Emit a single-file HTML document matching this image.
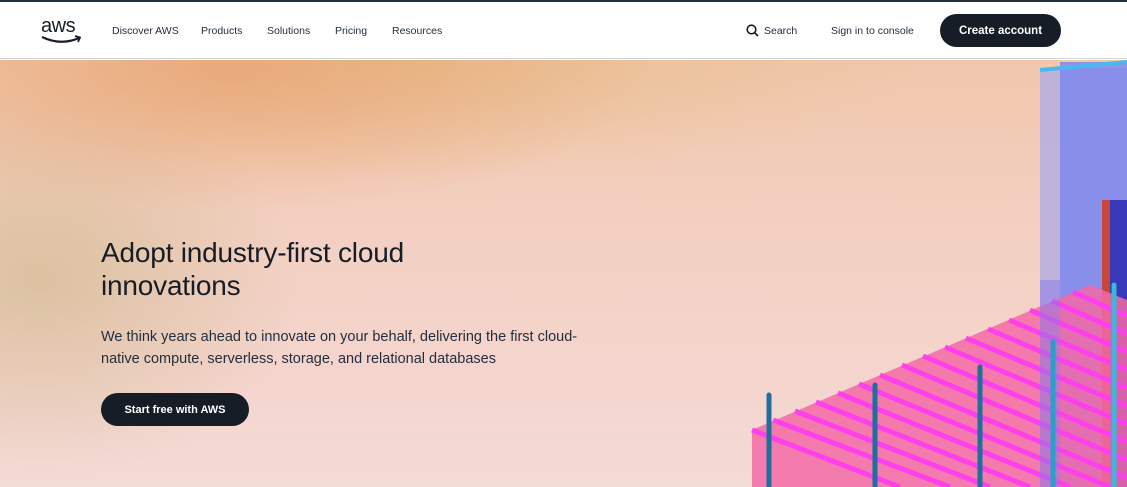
<!DOCTYPE html>
<html><head><meta charset="utf-8"><style>
*{margin:0;padding:0;box-sizing:border-box}
body{width:1127px;height:487px;overflow:hidden;font-family:"Liberation Sans",sans-serif;background:#fff;position:relative}
.top{position:absolute;left:0;top:0;width:1127px;height:2px;background:#232f3e}
header{position:absolute;top:2px;left:0;width:1127px;height:57px;background:#fff;border-bottom:1px solid #d5d5d5}
.nav{position:absolute;top:23px;font-size:10.5px;color:#232f3e}
.hero{position:absolute;top:60px;left:0;width:1127px;height:427px;overflow:hidden;
background:radial-gradient(ellipse 420px 140px at 230px 10px,rgba(232,160,110,.7),transparent),
radial-gradient(ellipse 260px 200px at 40px 220px,rgba(200,180,130,.55),transparent),
radial-gradient(ellipse 500px 120px at 420px 0px,rgba(225,185,120,.55),transparent),
linear-gradient(180deg,#f1c7ac 0%,#f3d0c2 40%,#f4d4cc 70%,#f3dbd6 100%)}
h1{position:absolute;left:101px;top:236px;font-size:28px;font-weight:400;line-height:33px;color:#161d26;letter-spacing:-.2px}
p{position:absolute;left:101px;top:326px;font-size:14.5px;line-height:22px;color:#232f3e;white-space:nowrap}
.btn{position:absolute;background:#161d26;color:#fff;border-radius:17px;font-size:11px;font-weight:700;text-align:center}
</style></head><body>
<div class="top"></div>
<header>
<svg style="position:absolute;left:41px;top:13px" width="42" height="30" viewBox="0 0 42 30">
<text x="0" y="17" font-family="Liberation Sans" font-size="20" fill="#161d26" letter-spacing="-0.5">aws</text>
<path d="M1 22 Q20 31 38 23" stroke="#161d26" stroke-width="2.2" fill="none"/>
<path d="M34 21 L39 22.5 L37 27" stroke="#161d26" stroke-width="1.8" fill="none"/>
</svg>
<span class="nav" style="left:112px">Discover AWS</span>
<span class="nav" style="left:201px">Products</span>
<span class="nav" style="left:267px">Solutions</span>
<span class="nav" style="left:335px">Pricing</span>
<span class="nav" style="left:392px">Resources</span>
<svg style="position:absolute;left:746px;top:22px" width="13" height="13" viewBox="0 0 13 13"><circle cx="5.5" cy="5.5" r="4.3" stroke="#161d26" stroke-width="1.6" fill="none"/><path d="M8.6 8.6L12 12" stroke="#161d26" stroke-width="1.7"/></svg>
<span class="nav" style="left:764px">Search</span>
<span class="nav" style="left:831px">Sign in to console</span>
<div class="btn" style="left:940px;top:12px;width:121px;height:33px;line-height:34px;font-size:11.5px">Create account</div>
</header>
<div class="hero">
<svg width="1127" height="427" viewBox="0 60 1127 427" style="position:absolute;left:0;top:0">
<defs><linearGradient id="g1" x1="0" y1="0" x2="0" y2="1"><stop offset="0" stop-color="#2aa7d8"/><stop offset="1" stop-color="#7fd23a"/></linearGradient></defs>
<rect x="1040" y="68" width="90" height="420" fill="#b5aee0" opacity=".85"/>
<rect x="1060" y="62" width="70" height="425" fill="#7a86ee" opacity=".8"/>
<path d="M1040 72 L1127 64 L1127 60 L1040 68Z" fill="#4ab8f0"/>
<rect x="1102" y="200" width="8" height="287" fill="#c8463c"/>
<rect x="1110" y="200" width="17" height="287" fill="#3838b8"/>
<path d="M752 430 L1090 285 L1127 300 L1127 487 L752 487Z" fill="#f36aa6" opacity=".85"/>
<g stroke="#ff3df0" stroke-width="5" opacity=".95">
<line x1="752" y1="430" x2="900" y2="487"/><line x1="773" y1="420" x2="950" y2="487"/><line x1="795" y1="411" x2="990" y2="487"/><line x1="816" y1="402" x2="1030" y2="487"/><line x1="838" y1="393" x2="1070" y2="487"/><line x1="859" y1="384" x2="1110" y2="487"/><line x1="880" y1="375" x2="1127" y2="478"/><line x1="902" y1="365" x2="1127" y2="460"/><line x1="923" y1="356" x2="1127" y2="442"/><line x1="945" y1="347" x2="1127" y2="424"/><line x1="966" y1="338" x2="1127" y2="406"/><line x1="988" y1="329" x2="1127" y2="388"/><line x1="1009" y1="320" x2="1127" y2="370"/><line x1="1030" y1="310" x2="1127" y2="352"/><line x1="1052" y1="301" x2="1127" y2="334"/><line x1="1073" y1="292" x2="1127" y2="316"/>
</g>
<rect x="1040" y="280" width="20" height="207" fill="#8a7ae8" opacity=".5"/>
<g stroke-linecap="round" stroke-width="5">
<line x1="895" y1="60" x2="895" y2="216" stroke="url(#g1)"/>
<line x1="769" y1="395" x2="769" y2="487" stroke="#1e6f9a"/>
<line x1="875" y1="385" x2="875" y2="487" stroke="#1e6f9a"/>
<line x1="980" y1="367" x2="980" y2="487" stroke="#1e6f9a"/>
<line x1="1053" y1="342" x2="1053" y2="487" stroke="#2aa0c8"/>
<line x1="1114" y1="285" x2="1114" y2="487" stroke="#3ab8d8"/>
</g>
</svg>
</div>
<h1>Adopt industry-first cloud<br>innovations</h1>
<p>We think years ahead to innovate on your behalf, delivering the first cloud-<br>native compute, serverless, storage, and relational databases</p>
<div class="btn" style="left:101px;top:393px;width:148px;height:33px;line-height:34px">Start free with AWS</div>
</body></html>
